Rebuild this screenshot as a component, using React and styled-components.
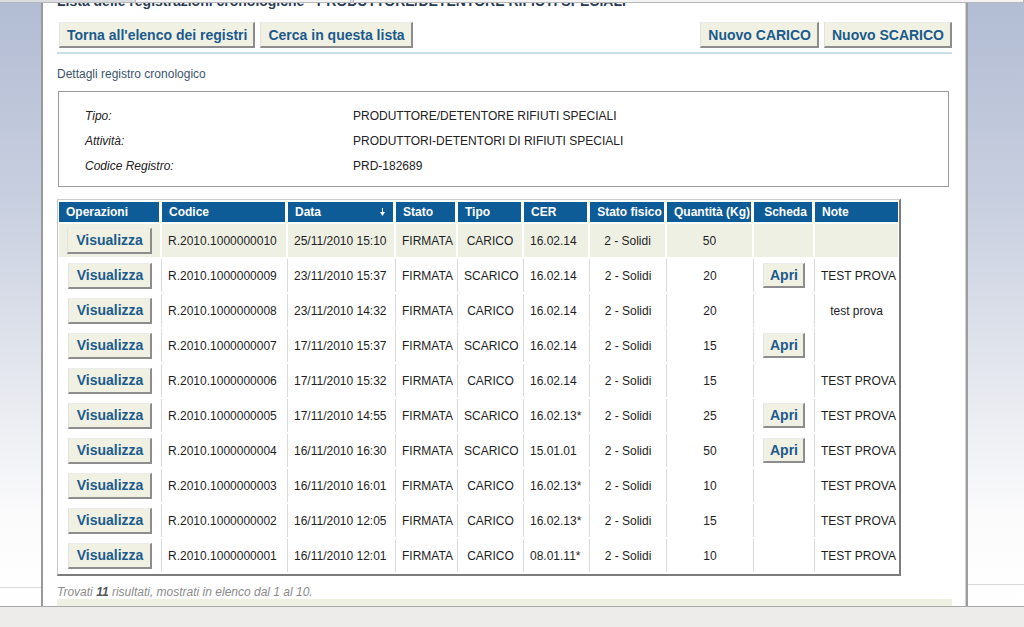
import React from 'react';
import styled, { createGlobalStyle } from 'styled-components';

const Global = createGlobalStyle`
  html, body { margin: 0; padding: 0; background: #fff; }
  body { font-family: "Liberation Sans", Arial, sans-serif; }
`;

const Page = styled.div`
  position: relative;
  width: 1024px;
  height: 627px;
  overflow: hidden;
  display: flex;
  flex-direction: column;
`;

const Chrome = styled.div`
  position: absolute;
  top: 0;
  left: 0;
  right: 0;
  height: 2px;
  background: #dcdde1;
  border-bottom: 1px solid #b7b8bc;
  display: flex;
  z-index: 2;
`;

const ChromeTab = styled.div`
  margin-left: ${p => p.$left}px;
  width: ${p => p.$w}px;
  background: #f3f3f4;
  border-left: 1px solid #b8b8bb;
  border-right: 1px solid #b8b8bb;
`;

const Main = styled.div`
  flex: 1;
  min-height: 0;
  display: grid;
  grid-template-columns: 41px 925px 1fr;
`;

const Gutter = styled.div`
  background:
    linear-gradient(to bottom, transparent ${p => p.$line}px, #d9d9d9 ${p => p.$line}px, #d9d9d9 ${p => p.$line + 1}px, transparent ${p => p.$line + 1}px),
    linear-gradient(to bottom, #b2bcd3 0%, #c9d0e0 35%, #e4e7ee 62%, #fbfbfc 85%, #ffffff 100%);
  border-left: ${p => (p.$side === 'right' ? '2px solid #9d9d9d' : '0')};
`;

const Panel = styled.div`
  background: #fff;
  border-left: 2px solid #9a9a9a;
  border-right: 1px solid #d2d2d2;
  padding: 0 13px 0 14px;
  display: flex;
  flex-direction: column;
  overflow: hidden;
`;

const TitleClip = styled.div`
  height: 9px;
  overflow: hidden;
`;

const Title = styled.h1`
  margin: -8px 0 0;
  font: bold 14px/18px "Liberation Sans", Arial, sans-serif;
  color: #2a3a52;
  white-space: nowrap;
`;

const Toolbar = styled.div`
  margin-top: 13px;
  display: flex;
  justify-content: space-between;
  padding: 0 0 4px 2px;
  border-bottom: 2px solid #c8e0ea;
`;

const ButtonGroup = styled.div`
  display: flex;
  gap: 5px;
`;

const Btn = styled.button`
  height: ${p => p.$h || 26}px;
  padding: 0 ${p => p.$pad || 6}px 0 ${p => (p.$pad || 6) + 1}px;
  background: #f1f1e3;
  border-style: solid;
  border-width: 1px 2px 2px 1px;
  border-color: #ececec #8d8d8d #8d8d8d #e2e2e2;
  font: bold 14px/1 "Liberation Sans", Arial, sans-serif;
  color: #1b5a8c;
  white-space: nowrap;
  cursor: pointer;
`;

const SectionHeading = styled.div`
  margin-top: 13px;
  font: 12px/14px "Liberation Sans", Arial, sans-serif;
  color: #3c5468;
`;

const DetailBox = styled.div`
  margin: 10px 3px 0 1px;
  border: 1px solid #9c9c9c;
  padding: 11px 0 8px 26px;
  display: grid;
  grid-template-columns: 268px 1fr;
  grid-auto-rows: 25px;
  align-items: center;
  font: 12px "Liberation Sans", Arial, sans-serif;
  color: #222;
`;

const DetailLabel = styled.div`
  font-style: italic;
`;

const DetailValue = styled.div``;

const TableWrap = styled.div`
  margin-top: 12px;
  width: 844px;
  box-sizing: border-box;
  border-style: solid;
  border-width: 1px 2px 2px 1px;
  border-color: #cdcdcd #7c7c7c #7c7c7c #c8c8c8;
  padding: 0 1px 0 1px;
`;

const Table = styled.table`
  table-layout: fixed;
  width: 839px;
  border-collapse: separate;
  border-spacing: 0 2px;
  font: 12px "Liberation Sans", Arial, sans-serif;
`;

const Th = styled.th`
  height: 20px;
  padding: 0 ${p => (p.$align === 'center' ? 2 : 6)}px 0 7px;
  background: #0d5b97;
  color: #fff;
  font-weight: bold;
  text-align: ${p => p.$align};
  border-right: ${p => (p.$last ? '0' : '3px solid #fff')};
  white-space: nowrap;
  overflow: hidden;
`;

const HeadInner = styled.div`
  display: flex;
  align-items: center;
  justify-content: space-between;
  padding-right: 2px;
`;

const Tr = styled.tr`
  background: ${p => (p.$hl ? '#eef0e4' : '#fff')};
`;

const Td = styled.td`
  height: 33px;
  padding: 0 6px;
  color: #1e1e1e;
  text-align: ${p => p.$align};
  border-right: ${p => (p.$last ? '0' : p.$hl ? '2px solid #fff' : '1px solid #dadada')};
  white-space: nowrap;
  overflow: hidden;
`;

const Footer = styled.div`
  margin-top: 9px;
  font: italic 12px/14px "Liberation Sans", Arial, sans-serif;
  color: #8b8b8b;
  b { color: #555; }
`;

const FooterBar = styled.div`
  height: 7px;
  background: #eef1e2;
`;

const BottomBar = styled.div`
  height: 20px;
  border-top: 1px solid #aaa;
  background: #eeecea;
`;

const columns = [
  { key: 'op', label: 'Operazioni', w: 103, h: 'left', a: 'center' },
  { key: 'code', label: 'Codice', w: 126, h: 'left', a: 'left' },
  { key: 'date', label: 'Data', w: 108, h: 'left', a: 'left', sort: true },
  { key: 'stato', label: 'Stato', w: 62, h: 'left', a: 'left' },
  { key: 'tipo', label: 'Tipo', w: 66, h: 'left', a: 'center' },
  { key: 'cer', label: 'CER', w: 66, h: 'left', a: 'left' },
  { key: 'fis', label: 'Stato fisico', w: 77, h: 'center', a: 'center' },
  { key: 'qty', label: 'Quantità (Kg)', w: 87, h: 'center', a: 'center' },
  { key: 'sch', label: 'Scheda', w: 61, h: 'center', a: 'center' },
  { key: 'note', label: 'Note', w: 83, h: 'left', a: 'center' },
];

const rows = [
  ['R.2010.1000000010', '25/11/2010 15:10', 'CARICO', '16.02.14', '50', false, ''],
  ['R.2010.1000000009', '23/11/2010 15:37', 'SCARICO', '16.02.14', '20', true, 'TEST PROVA'],
  ['R.2010.1000000008', '23/11/2010 14:32', 'CARICO', '16.02.14', '20', false, 'test prova'],
  ['R.2010.1000000007', '17/11/2010 15:37', 'SCARICO', '16.02.14', '15', true, ''],
  ['R.2010.1000000006', '17/11/2010 15:32', 'CARICO', '16.02.14', '15', false, 'TEST PROVA'],
  ['R.2010.1000000005', '17/11/2010 14:55', 'SCARICO', '16.02.13*', '25', true, 'TEST PROVA'],
  ['R.2010.1000000004', '16/11/2010 16:30', 'SCARICO', '15.01.01', '50', true, 'TEST PROVA'],
  ['R.2010.1000000003', '16/11/2010 16:01', 'CARICO', '16.02.13*', '10', false, 'TEST PROVA'],
  ['R.2010.1000000002', '16/11/2010 12:05', 'CARICO', '16.02.13*', '15', false, 'TEST PROVA'],
  ['R.2010.1000000001', '16/11/2010 12:01', 'CARICO', '08.01.11*', '10', false, 'TEST PROVA'],
];

const DownArrow = () => (
  <svg width="5" height="8" viewBox="0 0 5 8">
    <rect x="2" y="0" width="1" height="5" fill="#fff" />
    <path d="M0 4 L5 4 L2.5 8 Z" fill="#fff" />
  </svg>
);

export default function App() {
  return (
    <>
      <Global />
      <Page>
        <Chrome>
          <ChromeTab $left={135} $w={243} />
          <ChromeTab $left={2} $w={760} />
        </Chrome>
        <Main>
          <Gutter $side="left" $line={587} />
          <Panel>
            <TitleClip>
              <Title>Lista delle registrazioni cronologiche - PRODUTTORE/DETENTORE RIFIUTI SPECIALI</Title>
            </TitleClip>
            <Toolbar>
              <ButtonGroup>
                <Btn>Torna all'elenco dei registri</Btn>
                <Btn>Cerca in questa lista</Btn>
              </ButtonGroup>
              <ButtonGroup>
                <Btn>Nuovo CARICO</Btn>
                <Btn>Nuovo SCARICO</Btn>
              </ButtonGroup>
            </Toolbar>
            <SectionHeading>Dettagli registro cronologico</SectionHeading>
            <DetailBox>
              <DetailLabel>Tipo:</DetailLabel>
              <DetailValue>PRODUTTORE/DETENTORE RIFIUTI SPECIALI</DetailValue>
              <DetailLabel>Attività:</DetailLabel>
              <DetailValue>PRODUTTORI-DETENTORI DI RIFIUTI SPECIALI</DetailValue>
              <DetailLabel>Codice Registro:</DetailLabel>
              <DetailValue>PRD-182689</DetailValue>
            </DetailBox>
            <TableWrap>
              <Table>
                <colgroup>
                  {columns.map(c => (
                    <col key={c.key} style={{ width: c.w }} />
                  ))}
                </colgroup>
                <thead>
                  <tr>
                    {columns.map((c, i) => (
                      <Th key={c.key} $align={c.h} $last={i === columns.length - 1}>
                        {c.sort ? (
                          <HeadInner>
                            <span>{c.label}</span>
                            <DownArrow />
                          </HeadInner>
                        ) : (
                          c.label
                        )}
                      </Th>
                    ))}
                  </tr>
                </thead>
                <tbody>
                  {rows.map((r, idx) => {
                    const hl = idx === 0;
                    const cells = [
                      <Btn $pad={7}>Visualizza</Btn>,
                      r[0],
                      r[1],
                      'FIRMATA',
                      r[2],
                      r[3],
                      '2 - Solidi',
                      r[4],
                      r[5] ? <Btn $h={25} $pad={5}>Apri</Btn> : '',
                      r[6],
                    ];
                    return (
                      <Tr key={r[0]} $hl={hl}>
                        {cells.map((v, i) => (
                          <Td key={columns[i].key} $align={columns[i].a} $hl={hl} $last={i === columns.length - 1}>
                            {v}
                          </Td>
                        ))}
                      </Tr>
                    );
                  })}
                </tbody>
              </Table>
            </TableWrap>
            <Footer>
              Trovati <b>11</b> risultati, mostrati in elenco dal 1 al 10.
            </Footer>
            <FooterBar />
          </Panel>
          <Gutter $side="right" $line={584} />
        </Main>
        <BottomBar />
      </Page>
    </>
  );
}
